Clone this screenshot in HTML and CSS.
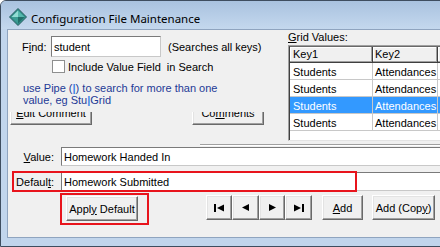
FILE: index.html
```html
<!DOCTYPE html>
<html>
<head>
<meta charset="utf-8">
<title>Configuration File Maintenance</title>
<link rel="stylesheet" href="styles.css">
</head>
<body>
<div class="window">
  <div class="titlebar">
    <svg class="app-icon" width="18" height="18" viewBox="0 0 18 18">
      <polygon points="9,0.5 17.5,9 9,17.5 0.5,9" fill="#2f8f88" stroke="#2b5e62" stroke-width="1"/>
      <polygon points="9,2.5 9,9 2.5,9" fill="#93dcd4"/>
      <polygon points="9,2.5 15.5,9 9,9" fill="#55b8ae"/>
      <polygon points="2.5,9 9,9 9,15.5" fill="#3c9d94"/>
      <polygon points="9,9 15.5,9 9,15.5" fill="#226f6a"/>
    </svg>
    <span class="title">Configuration File Maintenance</span>
  </div>
  <div class="client">
    <div class="top">
      <div class="search">
        <div class="find-row">
          <span class="find-label">F<u>i</u>nd:</span>
          <div class="textbox find-box"><span>student</span></div>
          <span class="hint">(Searches all keys)</span>
        </div>
        <div class="check-row">
          <span class="checkbox"></span>
          <span>Include Value Field&nbsp; in Search</span>
        </div>
        <div class="note">use Pipe (<span class="pipe">|</span>) to search for more than one<br>value, eg Stu<span class="pipe">|</span>Grid</div>
        <div class="btn-clip">
          <div class="btn edit-btn"><span><u>E</u>dit Comment</span></div>
          <div class="btn comment-btn"><span>Co<u>m</u>ments</span></div>
        </div>
      </div>
      <div class="grid-panel">
        <div class="grid-label"><u>G</u>rid Values:</div>
        <div class="grid">
          <div class="grid-inner">
            <div class="grid-row header">
              <div class="cell c1">Key1</div>
              <div class="cell c2">Key2</div>
              <div class="cell c3"></div>
            </div>
            <div class="grid-row">
              <div class="cell c1">Students</div>
              <div class="cell c2">Attendances</div>
              <div class="cell c3"></div>
            </div>
            <div class="grid-row">
              <div class="cell c1">Students</div>
              <div class="cell c2">Attendances</div>
              <div class="cell c3"></div>
            </div>
            <div class="grid-row selected">
              <div class="cell c1">Students</div>
              <div class="cell c2">Attendances</div>
              <div class="cell c3"></div>
            </div>
            <div class="grid-row">
              <div class="cell c1">Students</div>
              <div class="cell c2">Attendances</div>
              <div class="cell c3"></div>
            </div>
          </div>
        </div>
      </div>
    </div>
    <div class="separator"></div>
    <div class="field-row value-row">
      <span class="field-label"><u>V</u>alue:</span>
      <div class="textbox wide"><span>Homework Handed In</span></div>
    </div>
    <div class="field-row default-row">
      <span class="field-label">Defaul<u>t</u>:</span>
      <div class="textbox wide"><span>Homework Submitted</span></div>
    </div>
    <div class="button-row">
      <div class="btn apply-btn"><span>Appl<u>y</u> Default</span></div>
      <div class="nav-group">
        <div class="btn nav-btn"><svg width="11" height="8" viewBox="0 0 11 8"><rect x="0" y="0" width="2" height="8" fill="#000"/><polygon points="3,4 10,0.5 10,7.5" fill="#000"/></svg></div>
        <div class="btn nav-btn w27"><svg width="7" height="7" viewBox="0 0 7 7"><polygon points="0,3.5 7,0 7,7" fill="#000"/></svg></div>
        <div class="btn nav-btn"><svg width="7" height="7" viewBox="0 0 7 7"><polygon points="7,3.5 0,0 0,7" fill="#000"/></svg></div>
        <div class="btn nav-btn w27"><svg width="11" height="8" viewBox="0 0 11 8"><polygon points="8,4 1,0.5 1,7.5" fill="#000"/><rect x="9" y="0" width="2" height="8" fill="#000"/></svg></div>
      </div>
      <div class="btn add-btn"><span><u>A</u>dd</span></div>
      <div class="btn copy-btn"><span>Add (Cop<u>y</u>)</span></div>
    </div>
    <div class="annot annot-default"></div>
    <div class="annot annot-apply"></div>
  </div>
</div>
</body>
</html>
```
FILE: styles.css
```css
* { box-sizing: border-box; }

html, body {
  margin: 0;
  padding: 0;
  width: 440px;
  height: 247px;
  overflow: hidden;
  background: #ffffff;
}

body {
  font-family: "Liberation Sans", Arial, sans-serif;
  font-size: 11px;
  color: #000;
}

u { text-decoration: underline; text-underline-offset: 1px; }

.window {
  width: 480px;
  height: 247px;
  border: 1px solid #3e4d5f;
  border-radius: 6px 6px 0 0;
  background: #c1d5ec;
  padding: 0 0 8px 6px;
  display: flex;
  flex-direction: column;
}

.titlebar {
  height: 28px;
  flex: none;
  margin-left: -6px;
  padding: 7px 0 0 8px;
  display: flex;
  align-items: flex-start;
  background: linear-gradient(#a9c2df, #c4d8ee);
  border-radius: 5px 5px 0 0;
}

.app-icon { flex: none; display: block; }

.title {
  margin-left: 4px;
  margin-top: 4px;
  font-family: "Noto Sans", "Open Sans", sans-serif;
  font-size: 11.5px;
  line-height: 14px;
  color: #000;
  white-space: nowrap;
}

.client {
  flex: 1;
  position: relative;
  background: #f0f0f0;
  border: 1px solid #8fa4bf;
  border-right: none;
}

.top {
  display: flex;
  height: 114px;
}

.search {
  width: 280px;
  flex: none;
}

.find-row {
  display: flex;
  align-items: center;
  padding: 6px 0 0 14px;
}

.find-label { width: 29px; flex: none; }

.textbox {
  background: #fff;
  border: 1px solid;
  border-color: #7a7a7a #c8c8c8 #c8c8c8 #7a7a7a;
  padding: 0 2px;
  display: flex;
  align-items: center;
  white-space: nowrap;
  overflow: hidden;
  flex: none;
}

.find-box { width: 110px; height: 21px; }

.hint { margin-left: 7px; white-space: nowrap; }

.check-row {
  display: flex;
  align-items: center;
  margin-top: 3px;
  padding-left: 44px;
  height: 13px;
  white-space: nowrap;
}

.checkbox {
  width: 13px;
  height: 13px;
  flex: none;
  background: #fff;
  border: 1px solid #8e8f8f;
  margin-right: 3px;
}

.note {
  margin-top: 9px;
  padding: 0 0 6px 15px;
  line-height: 12px;
  color: #1e3a96;
  white-space: nowrap;
}

.pipe { color: #3c82e6; font-weight: bold; }

.btn-clip {
  height: 13px;
  overflow: hidden;
  display: flex;
  align-items: flex-end;
}

.btn {
  flex: none;
  height: 25px;
  display: flex;
  align-items: center;
  justify-content: center;
  background: #f0f0f0;
  border: 1px solid;
  border-color: #ffffff #696969 #696969 #ffffff;
  box-shadow: inset -1px -1px 0 #a0a0a0, inset 1px 1px 0 #e3e3e3;
  white-space: nowrap;
}

.edit-btn { margin-left: 2px; width: 82px; }
.comment-btn { margin-left: 100px; width: 72px; }

.grid-panel {
  flex: none;
  width: 200px;
}

.grid-label {
  height: 15px;
  line-height: 15px;
}

.grid {
  height: 96px;
  border: 1px solid;
  border-color: #a0a0a0 #e3e3e3 #e3e3e3 #a0a0a0;
  background: #fff;
}

.grid-inner {
  height: 100%;
  border-left: 1px solid #404040;
  border-top: 1px solid #696969;
}

.grid-row {
  display: flex;
  height: 17px;
}

.cell {
  flex: none;
  height: 17px;
  padding: 3px 0 0 3px;
  line-height: 13px;
  border-right: 1px solid #c8c8c8;
  border-bottom: 1px solid #c8c8c8;
  overflow: hidden;
  white-space: nowrap;
}

.c1 { width: 83px; }
.c2 { width: 65px; padding-left: 2px; }
.c3 { flex: 1; border-right: none; }

.header { height: 16px; }

.header .cell {
  height: 16px;
  padding-top: 1px;
  background: #f0f0f0;
  border-right: 1px solid #404040;
  border-bottom: 1px solid #404040;
  box-shadow: inset -1px -1px 0 #a0a0a0, inset 1px 1px 0 #ffffff;
}

.header .c3 { border-right: none; }

.selected .cell {
  background: #3399ff;
  color: #fff;
}

.separator {
  margin-left: 192px;
  border-top: 1px solid #a0a0a0;
  border-bottom: 1px solid #ffffff;
}

.field-row {
  display: flex;
  align-items: center;
  height: 19px;
}

.value-row { margin-top: 1px; }
.default-row { margin-top: 6px; }

.field-label {
  width: 53px;
  flex: none;
  text-align: right;
  padding-right: 7px;
}

.wide { width: 420px; height: 19px; }

.button-row {
  display: flex;
  align-items: flex-start;
  margin-top: 4px;
}

.apply-btn { margin-left: 58px; margin-top: 1px; width: 72px; }

.nav-group {
  display: flex;
  margin-left: 68px;
}

.nav-btn { width: 26px; }
.nav-btn.w27 { width: 27px; }
.nav-btn svg { display: block; }

.add-btn { margin-left: 10px; width: 41px; }
.copy-btn { margin-left: 9px; width: 63px; }

.annot {
  position: absolute;
  border: 2px solid #e8141c;
  pointer-events: none;
}

.annot-default { left: 4px; top: 141px; width: 345px; height: 21px; }
.annot-apply { left: 52px; top: 163px; width: 89px; height: 32px; }
```
